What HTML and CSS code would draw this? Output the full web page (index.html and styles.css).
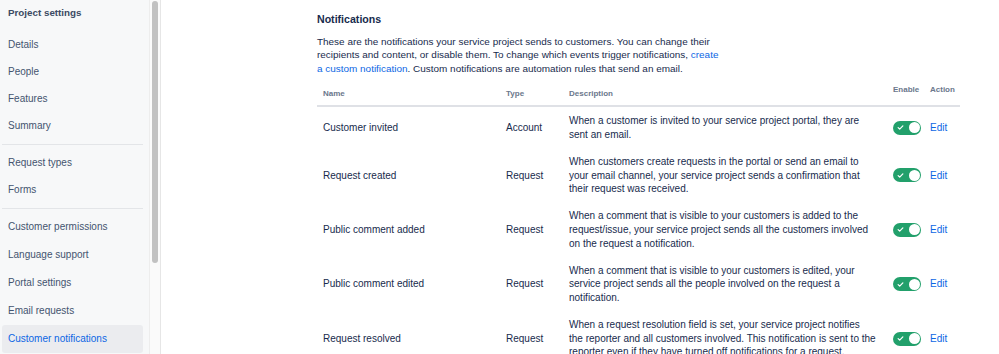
FILE: index.html
```html
<!DOCTYPE html>
<html lang="en">
<head>
<meta charset="utf-8">
<title>Customer notifications</title>
<link rel="stylesheet" href="styles.css">
</head>
<body>
<nav class="sidebar">
  <div class="side-title">Project settings</div>
  <div class="side-group">
    <a class="side-item">Details</a>
    <a class="side-item">People</a>
    <a class="side-item">Features</a>
    <a class="side-item">Summary</a>
  </div>
  <div class="side-sep"></div>
  <div class="side-group">
    <a class="side-item">Request types</a>
    <a class="side-item">Forms</a>
  </div>
  <div class="side-sep"></div>
  <div class="side-group tall">
    <a class="side-item">Customer permissions</a>
    <a class="side-item">Language support</a>
    <a class="side-item">Portal settings</a>
    <a class="side-item">Email requests</a>
    <a class="side-item selected">Customer notifications</a>
  </div>
</nav>
<div class="scrolltrack"><div class="thumb"></div></div>
<main class="main">
  <h1 class="title">Notifications</h1>
  <p class="intro">These are the notifications your service project sends to customers. You can change their recipients and content, or disable them. To change which events trigger notifications, <a class="link">create a custom notification</a>. Custom notifications are automation rules that send an email.</p>
  <table class="ntable">
    <colgroup>
      <col class="c-name"><col class="c-type"><col class="c-desc"><col class="c-enable"><col class="c-action">
    </colgroup>
    <thead>
      <tr>
        <th>Name</th><th>Type</th><th>Description</th><th class="th-up">Enable</th><th class="th-up">Action</th>
      </tr>
    </thead>
    <tbody>
      <tr>
        <td>Customer invited</td><td>Account</td>
        <td class="desc">When a customer is invited to your service project portal, they are sent an email.</td>
        <td><span class="toggle"><svg class="check" viewBox="0 0 8 8" width="7" height="7"><path d="M1.3 4.2 L3.1 5.9 L6.7 2.2" fill="none" stroke="#fff" stroke-width="1.4" stroke-linecap="round" stroke-linejoin="round"/></svg><span class="knob"></span></span></td>
        <td><a class="link">Edit</a></td>
      </tr>
      <tr>
        <td>Request created</td><td>Request</td>
        <td class="desc">When customers create requests in the portal or send an email to your email channel, your service project sends a confirmation that their request was received.</td>
        <td><span class="toggle"><svg class="check" viewBox="0 0 8 8" width="7" height="7"><path d="M1.3 4.2 L3.1 5.9 L6.7 2.2" fill="none" stroke="#fff" stroke-width="1.4" stroke-linecap="round" stroke-linejoin="round"/></svg><span class="knob"></span></span></td>
        <td><a class="link">Edit</a></td>
      </tr>
      <tr>
        <td>Public comment added</td><td>Request</td>
        <td class="desc">When a comment that is visible to your customers is added to the request/issue, your service project sends all the customers involved on the request a notification.</td>
        <td><span class="toggle"><svg class="check" viewBox="0 0 8 8" width="7" height="7"><path d="M1.3 4.2 L3.1 5.9 L6.7 2.2" fill="none" stroke="#fff" stroke-width="1.4" stroke-linecap="round" stroke-linejoin="round"/></svg><span class="knob"></span></span></td>
        <td><a class="link">Edit</a></td>
      </tr>
      <tr>
        <td>Public comment edited</td><td>Request</td>
        <td class="desc">When a comment that is visible to your customers is edited, your service project sends all the people involved on the request a notification.</td>
        <td><span class="toggle"><svg class="check" viewBox="0 0 8 8" width="7" height="7"><path d="M1.3 4.2 L3.1 5.9 L6.7 2.2" fill="none" stroke="#fff" stroke-width="1.4" stroke-linecap="round" stroke-linejoin="round"/></svg><span class="knob"></span></span></td>
        <td><a class="link">Edit</a></td>
      </tr>
      <tr>
        <td>Request resolved</td><td>Request</td>
        <td class="desc">When a request resolution field is set, your service project notifies the reporter and all customers involved. This notification is sent to the reporter even if they have turned off notifications for a request.</td>
        <td><span class="toggle"><svg class="check" viewBox="0 0 8 8" width="7" height="7"><path d="M1.3 4.2 L3.1 5.9 L6.7 2.2" fill="none" stroke="#fff" stroke-width="1.4" stroke-linecap="round" stroke-linejoin="round"/></svg><span class="knob"></span></span></td>
        <td><a class="link">Edit</a></td>
      </tr>
    </tbody>
  </table>
</main>
</body>
</html>
```

FILE: styles.css
```css
* { box-sizing: border-box; }
html, body { margin: 0; padding: 0; }
body {
  display: flex;
  height: 354px;
  overflow: hidden;
  background: #ffffff;
  font-family: "Liberation Sans", Arial, sans-serif;
  font-size: 10px;
  line-height: 13.6px;
  color: #172B4D;
}

/* Sidebar */
.sidebar {
  width: 149px;
  flex: none;
  background: #F7F8F9;
  padding-top: 6px;
}
.side-title {
  padding-left: 8px;
  height: 14px;
  line-height: 14px;
  font-size: 9.8px;
  font-weight: 700;
  color: #3B4A63;
  margin-bottom: 10.5px;
}
.side-group {
  display: flex;
  flex-direction: column;
}
.side-item {
  display: block;
  margin: 0 6px 0 2px;
  padding-left: 6px;
  height: 27px;
  line-height: 27px;
  color: #44546F;
  font-size: 10px;
  border-radius: 3px;
}
.side-group.tall .side-item {
  height: 28px;
  line-height: 28px;
}
.side-item.selected {
  background: #EBECEF;
  color: #0C66E4;
}
.side-sep {
  margin: 5px 6px 4px 2px;
  height: 1px;
  background: #E3E5E8;
}

/* Scrollbar */
.scrolltrack {
  width: 12px;
  flex: none;
  background: #FAFAFA;
  border-left: 1px solid #EDEDED;
  border-right: 1px solid #E6E6E6;
  padding: 1px 2px 0 2px;
}
.thumb {
  height: 262px;
  background: #C1C1C1;
  border-radius: 3px;
}

/* Main */
.main {
  flex: 1;
  padding: 12px 0 0 156px;
}
.title {
  margin: 0;
  font-size: 10.6px;
  line-height: 14px;
  font-weight: 700;
  color: #172B4D;
}
.intro {
  margin: 8.5px 0 0 0;
  max-width: 408px;
  font-size: 9.95px;
  line-height: 13.8px;
  color: #172B4D;
}
.link {
  color: #0C66E4;
  text-decoration: none;
}

.ntable {
  width: 643px;
  border-collapse: collapse;
  margin-top: 1px;
  table-layout: fixed;
}
.c-name { width: 183px; }
.c-type { width: 63px; }
.c-desc { width: 324px; }
.c-enable { width: 37px; }
.c-action { width: 36px; }

.ntable th {
  text-align: left;
  font-size: 8px;
  font-weight: 700;
  color: #6B778C;
  padding: 10px 6px 5px 6px;
  line-height: 13.6px;
  border-bottom: 2px solid #DFE1E6;
  vertical-align: top;
}
.ntable th.th-up { padding-top: 6.5px; }
.ntable td {
  padding: 6.8px 6px;
  vertical-align: middle;
  line-height: 13.6px;
  font-size: 10px;
  color: #172B4D;
}
.ntable td.desc {
  padding-right: 10.9px;
}

.toggle {
  display: flex;
  align-items: center;
  justify-content: space-between;
  width: 28px;
  height: 14px;
  border-radius: 7px;
  background: #22A06B;
  padding: 0 1.5px 0 4px;
}
.check { display: block; }
.knob {
  display: block;
  width: 11px;
  height: 11px;
  border-radius: 50%;
  background: #ffffff;
}
```
